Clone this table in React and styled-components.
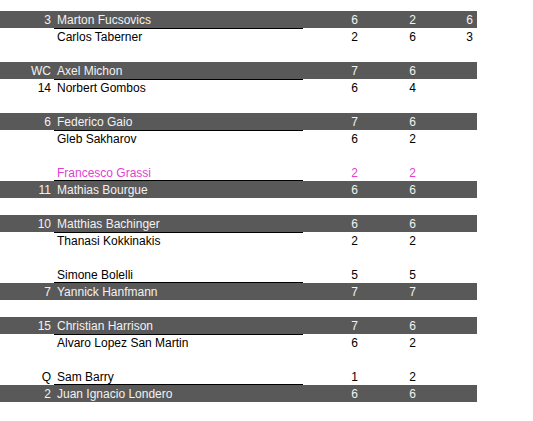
import React from 'react';
import styled, { createGlobalStyle } from 'styled-components';

const GlobalStyle = createGlobalStyle`
  body {
    margin: 0;
    background: #ffffff;
    font-family: "Liberation Sans", Arial, sans-serif;
  }
`;

const Sheet = styled.div`
  padding-top: 11px;
  width: 477px;
`;

const Row = styled.div`
  display: grid;
  grid-template-columns: 54px 249px 59px 58px 57px;
  height: 17px;
  background: ${(props) => (props.$dark ? '#595959' : 'transparent')};
  color: ${(props) => (props.$dark ? '#f2f2f2' : props.$color || '#000000')};
  font-size: 12px;
`;

const Cell = styled.div`
  box-sizing: border-box;
  height: 17px;
  padding-top: 2px;
  line-height: 15px;
  white-space: nowrap;
  overflow: hidden;
`;

const Seed = styled(Cell)`
  text-align: right;
  padding-right: 3px;
`;

// the bracket line sits inside the white row next to the winner's bar
const Name = styled(Cell)`
  padding-left: 3px;
  box-shadow: ${(props) =>
    props.$line === 'top'
      ? 'inset 0 1px 0 #000'
      : props.$line === 'bottom'
      ? 'inset 0 -1px 0 #000'
      : 'none'};
`;

const Score = styled(Cell)`
  text-align: right;
  padding-right: 4px;
`;

const rows = [
  { dark: true, seed: '3', name: 'Marton Fucsovics', scores: ['6', '2', '6'] },
  { name: 'Carlos Taberner', scores: ['2', '6', '3'], line: 'top' },
  {},
  { dark: true, seed: 'WC', name: 'Axel Michon', scores: ['7', '6'] },
  { seed: '14', name: 'Norbert Gombos', scores: ['6', '4'], line: 'top' },
  {},
  { dark: true, seed: '6', name: 'Federico Gaio', scores: ['7', '6'] },
  { name: 'Gleb Sakharov', scores: ['6', '2'], line: 'top' },
  {},
  { name: 'Francesco Grassi', scores: ['2', '2'], line: 'bottom', color: '#e23fce' },
  { dark: true, seed: '11', name: 'Mathias Bourgue', scores: ['6', '6'] },
  {},
  { dark: true, seed: '10', name: 'Matthias Bachinger', scores: ['6', '6'] },
  { name: 'Thanasi Kokkinakis', scores: ['2', '2'], line: 'top' },
  {},
  { name: 'Simone Bolelli', scores: ['5', '5'], line: 'bottom' },
  { dark: true, seed: '7', name: 'Yannick Hanfmann', scores: ['7', '7'] },
  {},
  { dark: true, seed: '15', name: 'Christian Harrison', scores: ['7', '6'] },
  { name: 'Alvaro Lopez San Martin', scores: ['6', '2'], line: 'top' },
  {},
  { seed: 'Q', name: 'Sam Barry', scores: ['1', '2'], line: 'bottom' },
  { dark: true, seed: '2', name: 'Juan Ignacio Londero', scores: ['6', '6'] },
];

const App = () => {
  return (
    <>
      <GlobalStyle />
      <Sheet>
        {rows.map((row, i) => {
          const scores = row.scores || [];
          return (
            <Row key={i} $dark={row.dark} $color={row.color}>
              <Seed>{row.seed}</Seed>
              <Name $line={row.line}>{row.name}</Name>
              <Score>{scores[0]}</Score>
              <Score>{scores[1]}</Score>
              <Score>{scores[2]}</Score>
            </Row>
          );
        })}
      </Sheet>
    </>
  );
};

export default App;
